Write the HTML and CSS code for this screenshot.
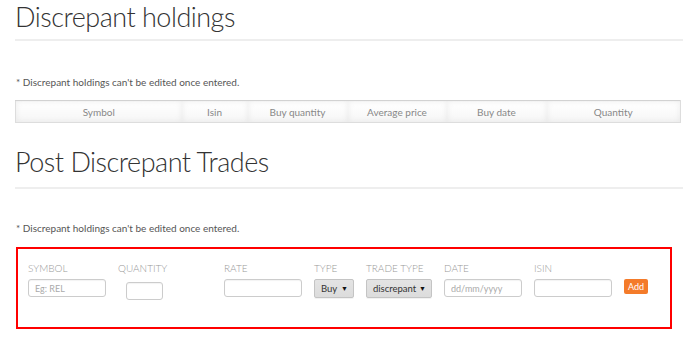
FILE: index.html
```html
<!DOCTYPE html>
<html lang="en">
<head>
    <meta charset="UTF-8">
    <meta name="viewport" content="width=device-width, initial-scale=1.0">
    <title>Discrepant holdings</title>
    <link rel="stylesheet" href="styles.css">
</head>
<body>
    <div class="page">
        <section class="holdings-block">
            <h1 class="page-title">Discrepant holdings</h1>
            <p class="note note-first">* Discrepant holdings can't be edited once entered.</p>

            <table class="holdings">
                <colgroup>
                    <col class="c-symbol">
                    <col class="c-isin">
                    <col class="c-buyqty">
                    <col class="c-avg">
                    <col class="c-date">
                    <col class="c-qty">
                </colgroup>
                <thead>
                    <tr>
                        <th>Symbol</th>
                        <th>Isin</th>
                        <th>Buy quantity</th>
                        <th>Average price</th>
                        <th>Buy date</th>
                        <th>Quantity</th>
                    </tr>
                </thead>
            </table>
        </section>

        <section class="trades-block">
            <h1 class="page-title page-title-second">Post Discrepant Trades</h1>
            <p class="note note-second">* Discrepant holdings can't be edited once entered.</p>

            <form class="trade-form">
                <div class="field f-symbol">
                    <label>Symbol</label>
                    <input type="text" class="box" placeholder="Eg: REL">
                </div>
                <div class="field f-quantity">
                    <label>Quantity</label>
                    <input type="text" class="box box-small">
                </div>
                <div class="field f-rate">
                    <label>Rate</label>
                    <input type="text" class="box">
                </div>
                <div class="field f-type">
                    <label>Type</label>
                    <div class="select">Buy <span class="arrow">&#9660;</span></div>
                </div>
                <div class="field f-tradetype">
                    <label>Trade type</label>
                    <div class="select">discrepant <span class="arrow">&#9660;</span></div>
                </div>
                <div class="field f-date">
                    <label>Date</label>
                    <input type="text" class="box" placeholder="dd/mm/yyyy">
                </div>
                <div class="field f-isin">
                    <label>Isin</label>
                    <input type="text" class="box">
                </div>
                <div class="field f-add">
                    <button type="button" class="add-btn">Add</button>
                </div>
            </form>
        </section>
    </div>
</body>
</html>
```

FILE: styles.css
```css
*{
    box-sizing: border-box;
}

body{
    margin: 0;
    background-color: #fff;
    font-family: Lato, "Noto Sans", sans-serif;
    color: #333;
}

.page{
    padding: 0 7px 0 15px;
}

.page-title{
    margin: 0;
    font-size: 27px;
    font-weight: 300;
    letter-spacing: -0.5px;
    line-height: 34px;
    color: #333;
    padding-bottom: 5px;
    border-bottom: 2px solid #eee;
}

.page-title-second{
    margin-top: 22px;
    padding-bottom: 8px;
}

.note{
    margin: 34px 0 0 1px;
    font-size: 10px;
    line-height: 14px;
    color: #555;
}

.note-second{
    margin-top: 32px;
}

/* holdings header */

.holdings{
    margin-top: 11px;
    width: 665px;
    border-collapse: collapse;
    table-layout: fixed;
    border: 1px solid #ddd;
    border-top-color: #d2d2d2;
}

.c-symbol{ width: 166px; }
.c-isin{ width: 66px; }
.c-buyqty{ width: 100px; }
.c-avg{ width: 99px; }
.c-date{ width: 100px; }
.c-qty{ width: 134px; }

.holdings th{
    height: 22px;
    padding: 0;
    font-size: 10px;
    font-weight: normal;
    color: #888;
    text-align: center;
    background: linear-gradient(#fff, #f6f6f6);
    box-shadow: inset 0 0 6px rgba(0, 0, 0, 0.07);
}

/* trade form */

.trade-form{
    margin: 12px 0 0 1px;
    width: 656px;
    height: 82px;
    border: 2px solid #f00;
    padding: 13px 10px 0 10px;
    display: flex;
    gap: 12px;
}

.field{
    display: flex;
    flex-direction: column;
}

.field label{
    font-size: 10px;
    line-height: 12px;
    text-transform: uppercase;
    color: #999;
    font-weight: 300;
    height: 17px;
}

.f-symbol, .f-rate, .f-date, .f-isin{ width: 78px; }
.f-quantity{ width: 94px; }
.f-type{ width: 40px; }
.f-tradetype{ width: 66px; }
.f-add{
    width: 24px;
    padding-top: 17px;
}

.box{
    width: 78px;
    height: 18px;
    border: 1px solid #ccc;
    border-radius: 3px;
    box-shadow: inset 0 1px 1px rgba(0, 0, 0, 0.05);
    padding: 0 6px;
    font-family: Lato, "Noto Sans", sans-serif;
    font-size: 9px;
    color: #555;
    outline: none;
}

.box::placeholder{
    color: #aaa;
}

.box-small{
    width: 37px;
    margin: 3px 0 0 8px;
}

.select{
    height: 19px;
    border: 1px solid #c4c4c4;
    border-radius: 2px;
    background: linear-gradient(#e4e4e4, #dcdcdc);
    font-size: 9.5px;
    line-height: 17px;
    color: #333;
    padding: 0 5px 0 6px;
    display: flex;
    justify-content: space-between;
    box-shadow: 0 1px 0 rgba(0, 0, 0, 0.05);
}

.arrow{
    font-size: 7px;
    color: #111;
}

.add-btn{
    width: 24px;
    height: 15px;
    padding: 0;
    border: 0;
    border-radius: 2px;
    background-color: #f47b2a;
    color: #fff;
    font-family: Lato, "Noto Sans", sans-serif;
    font-size: 9px;
    line-height: 15px;
    cursor: pointer;
}
```
